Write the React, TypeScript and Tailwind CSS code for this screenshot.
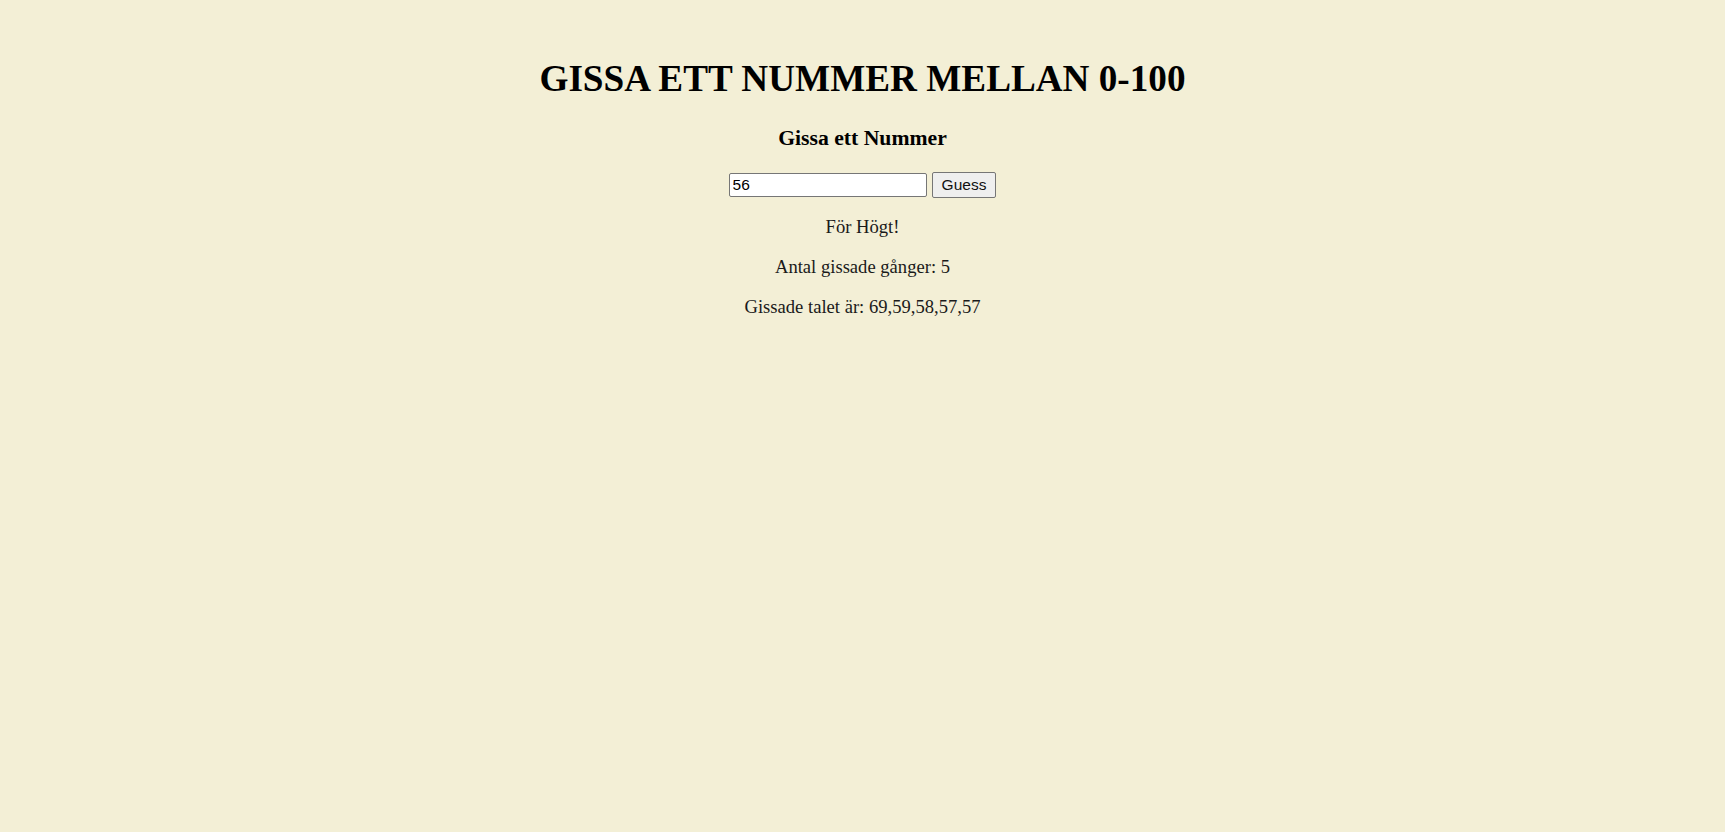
import { useState } from "react";

export default function App() {
	const [guess, setGuess] = useState("56");
	const guesses = [69, 59, 58, 57, 57];

	return (
		<div className="min-h-screen bg-[#f3efd6] text-black font-['Liberation_Serif',serif] text-center pt-[57px]">
			<h1 className="text-[37.2px] font-bold leading-[44px]">
				GISSA ETT NUMMER MELLAN 0-100
			</h1>
			<h3 className="mt-[25px] text-[21.7px] font-bold leading-[25px]">
				Gissa ett Nummer
			</h3>
			<div className="mt-[21px] flex justify-center items-center gap-[5px]">
				<input
					className="w-[198px] h-[24px] px-[3px] border border-[#767676] bg-white rounded-[2px] font-['Liberation_Sans',sans-serif] text-[15.5px] outline-none"
					value={guess}
					onChange={(e) => setGuess(e.target.value)}
				/>
				<button className="h-[26px] px-[9px] border border-[#767676] bg-[#efefef] rounded-[2px] font-['Liberation_Sans',sans-serif] text-[15.5px] text-[#111]">
					Guess
				</button>
			</div>
			<div className="mt-[18px] flex flex-col gap-[19px] text-[18.6px] leading-[21px] text-[#1a1a1a]">
				<p>För Högt!</p>
				<p>Antal gissade gånger: {guesses.length}</p>
				<p>Gissade talet är: {guesses.join(",")}</p>
			</div>
		</div>
	);
}
